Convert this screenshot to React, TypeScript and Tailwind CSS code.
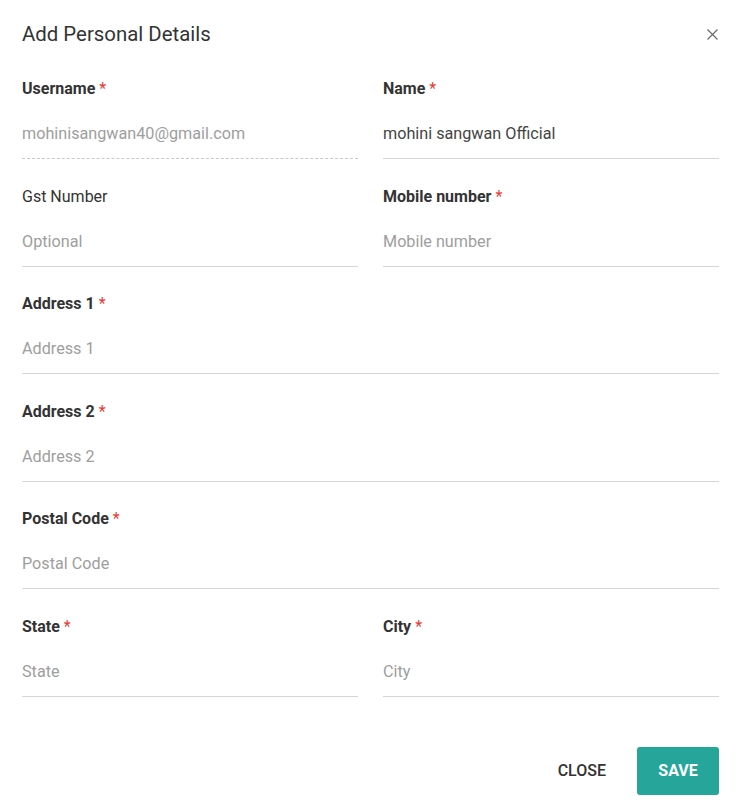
import React from "react";

function Label({ text, req = true, bold = true }: { text: string; req?: boolean; bold?: boolean }) {
  return (
    <div className={`h-5 leading-5 text-[16px] text-[#333] ${bold ? "font-bold" : "font-normal"}`}>
      {text}
      {req && <span className="text-[#e53935] font-normal"> *</span>}
    </div>
  );
}

function Field({
  label,
  placeholder,
  value,
  req = true,
  bold = true,
  dashed = false,
  grey = false,
}: {
  label: string;
  placeholder?: string;
  value?: string;
  req?: boolean;
  bold?: boolean;
  dashed?: boolean;
  grey?: boolean;
}) {
  return (
    <div className="flex flex-col">
      <Label text={label} req={req} bold={bold} />
      <div
        className={`mt-[14px] h-[46px] leading-[42px] text-[16.2px] border-b ${
          dashed ? "border-dashed border-[#c8c8c8]" : "border-[#d6d6d6]"
        } ${value && !grey ? "text-[#444]" : "text-[#9e9e9e]"}`}
      >
        {value ?? placeholder}
      </div>
    </div>
  );
}

export default function App() {
  return (
    <div
      className="w-[737px] h-[812px] bg-white pl-[22px] pr-[18px] pt-5 pb-[17px] flex flex-col"
      style={{ fontFamily: "Roboto, 'Noto Sans', sans-serif" }}
    >
      <div className="flex items-center justify-between h-7">
        <div className="text-[20.4px] text-[#333] leading-7">Add Personal Details</div>
        <svg width="11" height="11" viewBox="0 0 11 11" className="mr-[1px]">
          <path d="M0.5 0.5 L10.5 10.5 M10.5 0.5 L0.5 10.5" stroke="#666" strokeWidth="1.1" />
        </svg>
      </div>
      <div className="mt-[31px] flex flex-col gap-[27.5px]">
        <div className="grid grid-cols-2 gap-x-[25px]">
          <Field label="Username" value="mohinisangwan40@gmail.com" dashed grey />
          <Field label="Name" value="mohini sangwan Official" />
        </div>
        <div className="grid grid-cols-2 gap-x-[25px]">
          <Field label="Gst Number" placeholder="Optional" req={false} bold={false} />
          <Field label="Mobile number" placeholder="Mobile number" />
        </div>
        <Field label="Address 1" placeholder="Address 1" />
        <Field label="Address 2" placeholder="Address 2" />
        <Field label="Postal Code" placeholder="Postal Code" />
        <div className="grid grid-cols-2 gap-x-[25px]">
          <Field label="State" placeholder="State" />
          <Field label="City" placeholder="City" />
        </div>
      </div>
      <div className="mt-auto flex justify-end items-center gap-[31px]">
        <button className="text-[16px] font-medium text-[#333] uppercase">Close</button>
        <button className="w-[82px] h-12 rounded-[3px] bg-[#26a69a] text-white text-[16px] font-bold uppercase">
          Save
        </button>
      </div>
    </div>
  );
}
